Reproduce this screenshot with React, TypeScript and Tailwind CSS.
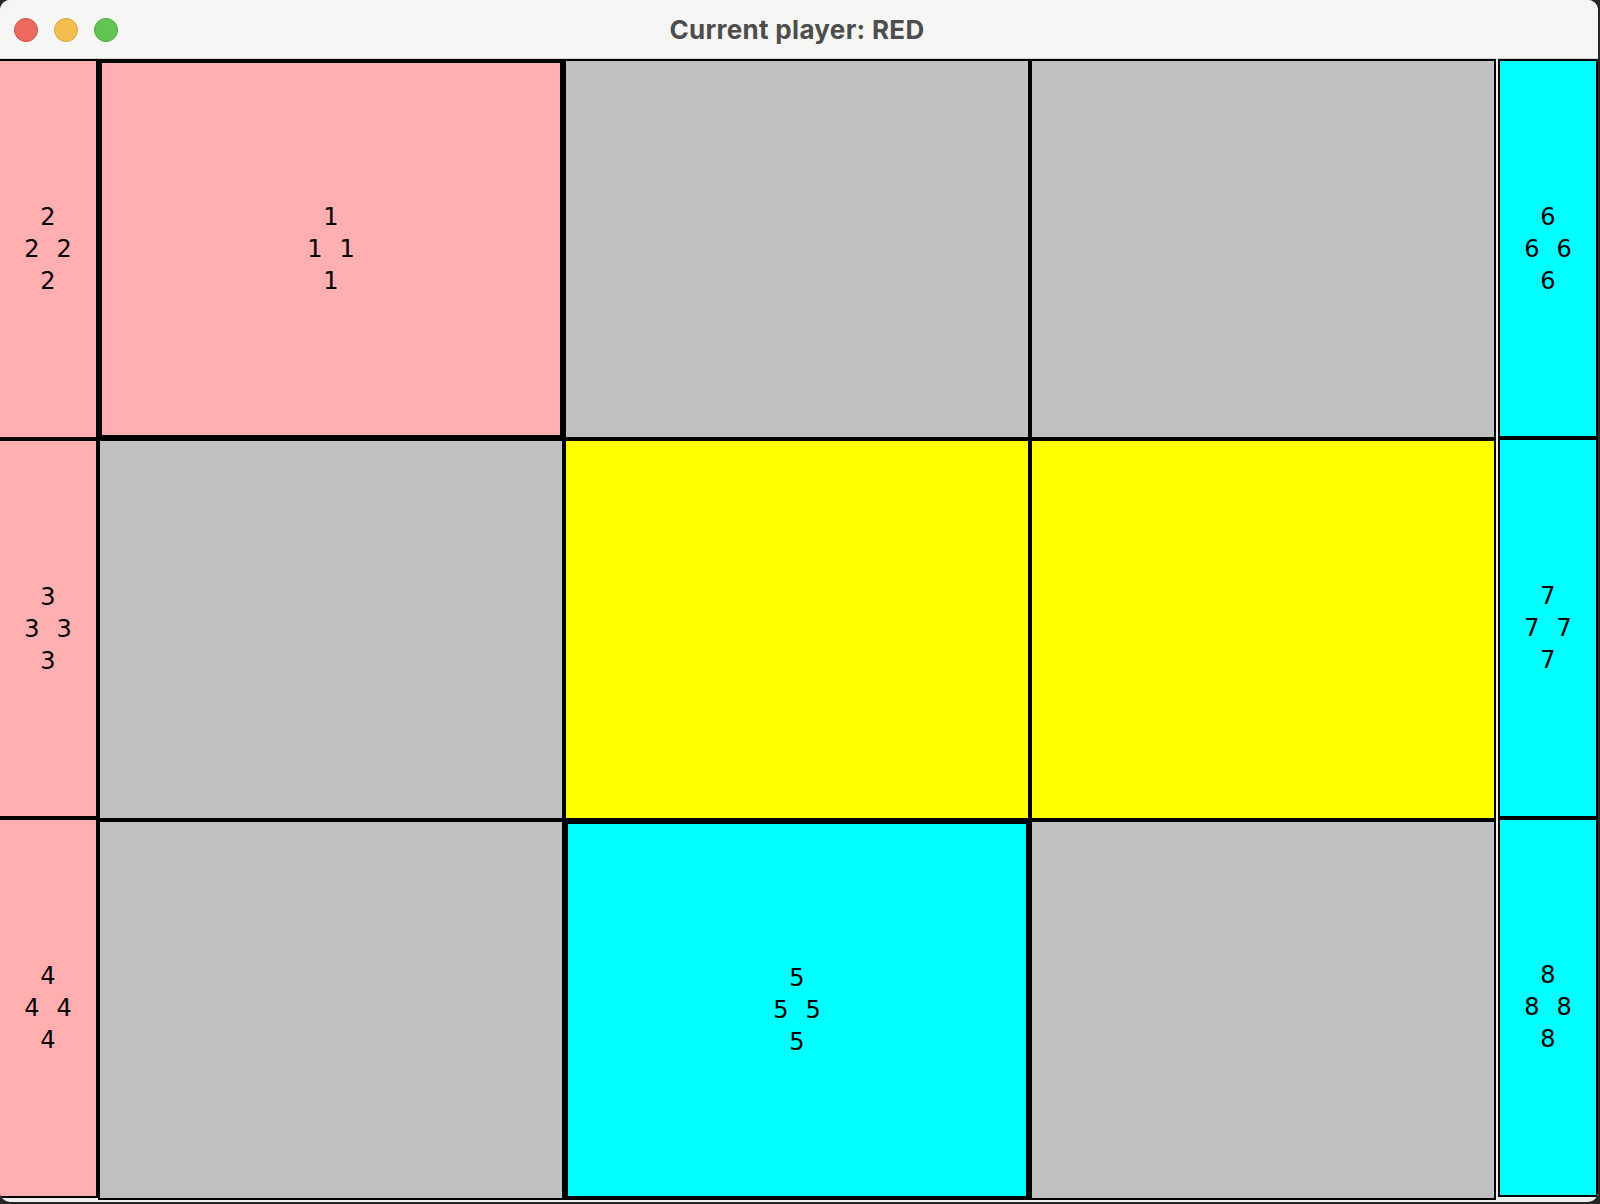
import React from 'react';

type Cell = { color: string; label?: string; active?: boolean };

const board: Cell[] = [
  { color: 'bg-[#ffafaf]', label: '1', active: true },
  { color: 'bg-[#c0c0c0]' },
  { color: 'bg-[#c0c0c0]' },
  { color: 'bg-[#c0c0c0]' },
  { color: 'bg-[#ffff00]' },
  { color: 'bg-[#ffff00]' },
  { color: 'bg-[#c0c0c0]' },
  { color: 'bg-[#00ffff]', label: '5', active: true },
  { color: 'bg-[#c0c0c0]' },
];

const leftPieces = ['2', '3', '4'];
const rightPieces = ['6', '7', '8'];

const Diamond: React.FC<{ n: string }> = ({ n }) => (
  <div className="flex flex-col items-center text-[24px] leading-[32px] text-black font-['DejaVu_Sans',sans-serif]">
    <span>{n}</span>
    <span className="flex gap-[17px]">
      <span>{n}</span>
      <span>{n}</span>
    </span>
    <span>{n}</span>
  </div>
);

export default function App() {
  return (
    <div className="w-[1600px] h-[1204px] bg-[#262626] overflow-hidden">
      <div className="w-[1598px] h-[1202px] rounded-[10px] overflow-hidden bg-[#eeeeee] flex flex-col">
        {/* title bar */}
        <div className="relative h-[59px] shrink-0 bg-[#f6f6f4] border-b border-[#d4d4d4] flex items-center justify-center">
          <div className="absolute left-[14px] top-[18px] flex gap-[16px]">
            <span className="w-[24px] h-[24px] rounded-full bg-[#ec6a5e] border border-[#d05045]" />
            <span className="w-[24px] h-[24px] rounded-full bg-[#f5bf4f] border border-[#d6a243]" />
            <span className="w-[24px] h-[24px] rounded-full bg-[#61c554] border border-[#51a73e]" />
          </div>
          <span className="pr-[4px] text-[26px] font-bold text-[#4d4d4d] font-['Inter',sans-serif] tracking-[0.3px]">
            Current player: RED
          </span>
        </div>

        {/* board */}
        <div className="flex h-[1141px]">
          <div className="w-[98px] h-[1139px] flex flex-col shrink-0">
            {leftPieces.map((n) => (
              <div
                key={n}
                className="flex-1 bg-[#ffafaf] border-2 border-l-0 border-black flex items-center justify-center"
              >
                <Diamond n={n} />
              </div>
            ))}
          </div>

          <div className="w-[1398px] h-[1141px] grid grid-cols-3 grid-rows-3 shrink-0">
            {board.map((c, i) => (
              <div
                key={i}
                className={`${c.color} ${c.active ? 'border-4' : 'border-2'} border-black flex items-center justify-center`}
              >
                {c.label && <Diamond n={c.label} />}
              </div>
            ))}
          </div>

          <div className="ml-[2px] w-[100px] h-[1138px] flex flex-col shrink-0">
            {rightPieces.map((n) => (
              <div
                key={n}
                className="flex-1 bg-[#00ffff] border-2 border-black flex items-center justify-center"
              >
                <Diamond n={n} />
              </div>
            ))}
          </div>
        </div>
      </div>
    </div>
  );
}
